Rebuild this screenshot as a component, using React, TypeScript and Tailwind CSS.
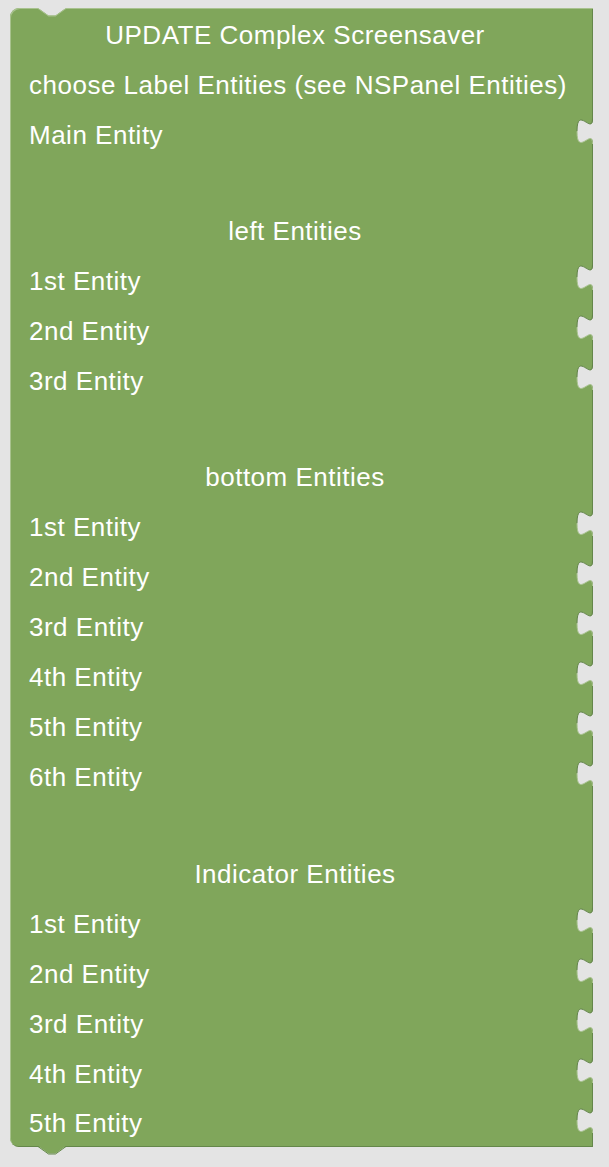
type Row =
  | { kind: "title"; text: string }
  | { kind: "label"; text: string }
  | { kind: "input"; text: string }
  | { kind: "gap"; h: string };

const rows: Row[] = [
  { kind: "title", text: "UPDATE Complex Screensaver" },
  { kind: "label", text: "choose Label Entities (see NSPanel Entities)" },
  { kind: "input", text: "Main Entity" },
  { kind: "gap", h: "h-[46px]" },
  { kind: "title", text: "left Entities" },
  { kind: "input", text: "1st Entity" },
  { kind: "input", text: "2nd Entity" },
  { kind: "input", text: "3rd Entity" },
  { kind: "gap", h: "h-[46px]" },
  { kind: "title", text: "bottom Entities" },
  { kind: "input", text: "1st Entity" },
  { kind: "input", text: "2nd Entity" },
  { kind: "input", text: "3rd Entity" },
  { kind: "input", text: "4th Entity" },
  { kind: "input", text: "5th Entity" },
  { kind: "input", text: "6th Entity" },
  { kind: "gap", h: "h-[47px]" },
  { kind: "title", text: "Indicator Entities" },
  { kind: "input", text: "1st Entity" },
  { kind: "input", text: "2nd Entity" },
  { kind: "input", text: "3rd Entity" },
  { kind: "input", text: "4th Entity" },
  { kind: "input", text: "5th Entity" },
];

// puzzle tab cut into the right edge of the block (value input)
function InputTab() {
  return (
    <svg
      className="absolute right-0 top-0"
      width="18"
      height="36"
      viewBox="0 0 18 36"
    >
      <path
        d="M18 8.5 C18 25.5 2 -5.1 2 21.25 C2 47.6 18 17 18 34 Z"
        fill="#e4e4e4"
      />
      <path
        d="M17.5 8.5 C17.5 25.5 2 -5.1 2 21.25"
        fill="none"
        stroke="#62834a"
        strokeWidth="1"
      />
      <path
        d="M2 21.25 C2 47.6 17.5 17 17.5 34"
        fill="none"
        stroke="#a9c390"
        strokeWidth="1"
      />
    </svg>
  );
}

export default function App() {
  const last = rows.length - 1;

  return (
    <div className="min-h-[1167px] w-full bg-[#e4e4e4] pt-[8px] pl-[10px] font-['Liberation_Sans',Arial,sans-serif] text-[26px] text-white">
      <div className="relative flex w-[583px] flex-col rounded-tl-[9px] rounded-bl-[9px] bg-[#80a65b] pt-[2px] shadow-[inset_1px_1px_0_#a8c28e,inset_-1px_-1px_0_#64874a]">
        {/* top notch */}
        <svg
          className="absolute left-[28px] top-0"
          width="28"
          height="9"
          viewBox="0 0 28 9"
        >
          <path d="M0 0 L10.5 7.5 L17.5 7.5 L28 0 Z" fill="#e4e4e4" />
          <path
            d="M0 0.5 L10.5 8 L17.5 8 L28 0.5"
            fill="none"
            stroke="#a8c28e"
            strokeWidth="1"
          />
        </svg>

        {rows.map((row, i) => {
          if (row.kind === "gap") return <div key={i} className={row.h} />;
          const h = i === last ? "h-[48px]" : "h-[50px]";
          return (
            <div
              key={i}
              className={`relative flex ${h} items-center whitespace-nowrap pl-[19px] pr-[32px] ${
                row.kind === "title" ? "justify-center" : "justify-start"
              }`}
            >
              <span className="tracking-[0.5px]">{row.text}</span>
              {row.kind === "input" && <InputTab />}
            </div>
          );
        })}

        {/* bottom tab */}
        <svg
          className="absolute left-[28px] top-[calc(100%-1px)]"
          width="28"
          height="10"
          viewBox="0 0 28 10"
        >
          <path d="M0 0 L10.5 7.5 L17.5 7.5 L28 0 Z" fill="#80a65b" />
          <path
            d="M0 0.5 L10.5 8 L17.5 8 L28 0.5"
            fill="none"
            stroke="#64874a"
            strokeWidth="1"
          />
        </svg>
      </div>
    </div>
  );
}
